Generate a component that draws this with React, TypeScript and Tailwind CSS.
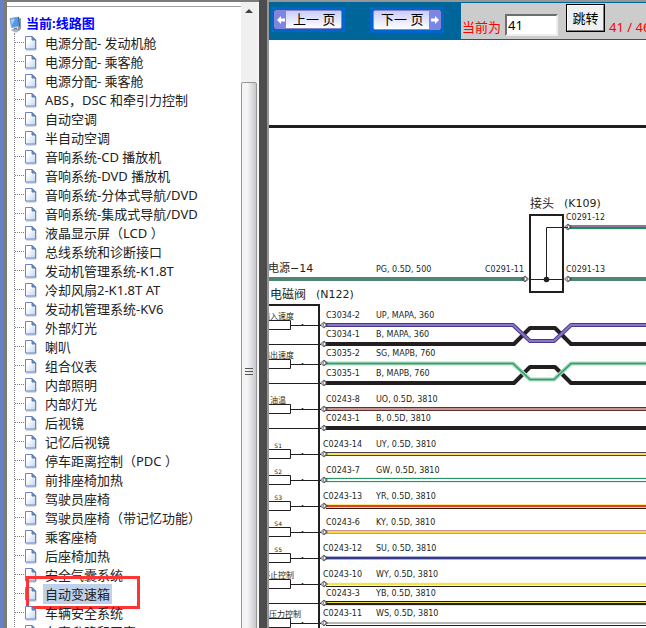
import { useState } from 'react';

const circuits = [
  '电源分配- 发动机舱',
  '电源分配- 乘客舱',
  '电源分配- 乘客舱',
  'ABS，DSC 和牵引力控制',
  '自动空调',
  '半自动空调',
  '音响系统-CD 播放机',
  '音响系统-DVD 播放机',
  '音响系统-分体式导航/DVD',
  '音响系统-集成式导航/DVD',
  '液晶显示屏（LCD ）',
  '总线系统和诊断接口',
  '发动机管理系统-K1.8T',
  '冷却风扇2-K1.8T AT',
  '发动机管理系统-KV6',
  '外部灯光',
  '喇叭',
  '组合仪表',
  '内部照明',
  '内部灯光',
  '后视镜',
  '记忆后视镜',
  '停车距离控制（PDC ）',
  '前排座椅加热',
  '驾驶员座椅',
  '驾驶员座椅（带记忆功能）',
  '乘客座椅',
  '后座椅加热',
  '安全气囊系统',
  '自动变速箱',
  '车辆安全系统',
  '车窗升降和天窗',
];

const INK = '#231f20';

// Pin labels: code, code x, wire spec, baseline
const labels: [string, number, string, number][] = [
  ['C3034-2', 326, 'UP, MAPA, 360', 318],
  ['C3034-1', 326, 'B, MAPA, 360', 337],
  ['C3035-2', 326, 'SG, MAPB, 760', 356],
  ['C3035-1', 326, 'B, MAPB, 760', 376],
  ['C0243-8', 326, 'UO, 0.5D, 3810', 402],
  ['C0243-1', 326, 'B, 0.5D, 3810', 421],
  ['C0243-14', 323, 'UY, 0.5D, 3810', 447],
  ['C0243-7', 326, 'GW, 0.5D, 3810', 473],
  ['C0243-13', 323, 'YR, 0.5D, 3810', 499],
  ['C0243-6', 326, 'KY, 0.5D, 3810', 525],
  ['C0243-12', 323, 'SU, 0.5D, 3810', 551],
  ['C0243-10', 323, 'WY, 0.5D, 3810', 577],
  ['C0243-3', 326, 'YB, 0.5D, 3810', 596],
  ['C0243-11', 323, 'WS, 0.5D, 3810', 616],
];

// Straight wires: pin y, then stripes as [top, height, colour]
const wires: { pin: number; stripes: [number, number, string][] }[] = [
  { pin: 409, stripes: [[407, 1, '#5c3236'], [408, 2, '#c8958c'], [410, 1, '#5c3236']] },
  { pin: 428, stripes: [[426, 4, INK]] },
  { pin: 454, stripes: [[452, 1, '#45424a'], [453, 2, '#f6e455'], [455, 1, '#45424a']] },
  { pin: 480, stripes: [[477, 1, '#d9f7e8'], [478, 1, '#2a9563'], [481, 1, '#2a9563'], [482, 1, '#d9f7e8']] },
  { pin: 506, stripes: [[504, 1, '#fbe78e'], [505, 2, '#e0401f'], [507, 1, '#fbd77e'], [508, 1, '#2c1d10']] },
  { pin: 532, stripes: [[530, 1, '#c8949c'], [531, 2, '#f9d443'], [533, 1, '#c694b0']] },
  { pin: 558, stripes: [[556, 1, '#a9b4cf'], [557, 2, '#39388d'], [559, 1, '#a9b4cf']] },
  { pin: 584, stripes: [[582, 1, '#fdfbdc'], [583, 2, '#f6e444'], [586, 1, INK]] },
  { pin: 603, stripes: [[601, 1, INK], [602, 1, '#efe04c'], [603, 2, INK], [605, 1, '#f5ec7e']] },
  { pin: 623, stripes: [[622, 2, '#b2b6b3'], [625, 1, INK]] },
];

const sensors: [string, number, number][] = [
  ['输入速度', 294, 325],
  ['输出速度', 294, 364],
  ['油温', 286, 409],
  ['S1', 282, 454],
  ['S2', 282, 480],
  ['S3', 282, 506],
  ['S4', 282, 532],
  ['S5', 282, 558],
  ['停止控制', 294, 584],
  ['主压力控制', 301, 623],
];

export default function App() {
  return (
    <div className="flex h-screen overflow-hidden bg-white font-['Noto_Sans','Noto_Sans_CJK_SC',sans-serif] text-[13px] text-[#222]">
      <div className="w-1 shrink-0 bg-[#6680c8]" />
      <Sidebar />
      <div className="w-2 shrink-0 bg-[#4d4d4d]" />
      <main className="flex min-w-0 flex-1 flex-col border-t-2 border-l-2 border-[#969696]">
        <Toolbar />
        <WiringDiagram />
      </main>
    </div>
  );
}

function Sidebar() {
  const [selected, setSelected] = useState(29);

  return (
    <aside className="flex w-[255px] shrink-0 border-t-2 border-l-3 border-[#7b7b7b]">
      <nav className="min-w-0 flex-1 overflow-hidden pt-1">
        <div className="border-t border-[#a0a0a0]" />
        <h1 className="mt-2 flex h-[18px] items-center pl-[2px] font-bold text-[#0000ff]">
          <ComputerIcon />
          <span className="ml-1">当前:线路图</span>
        </h1>
        <ul className="ml-[7px] border-l border-dotted border-[#808080]">
          {circuits.map((name, index) => (
            <li key={index} className="relative flex h-[19px] items-center">
              <span className="w-[9px] border-t border-dotted border-[#808080]" />
              <PageIcon />
              <a
                href="#"
                onClick={() => setSelected(index)}
                className={
                  index === selected
                    ? 'ml-[6px] bg-[#bfd0e9] px-[2px] leading-5 whitespace-nowrap'
                    : 'ml-[6px] px-[2px] leading-5 whitespace-nowrap'
                }
              >
                {name}
              </a>
              {index === selected && (
                <span className="pointer-events-none absolute -top-2 left-[11px] h-[33px] w-[114px] border-3 border-[#fd3535]" />
              )}
            </li>
          ))}
        </ul>
      </nav>
      <Scrollbar />
      <div className="w-[2px] bg-[#f5f5f5]" />
    </aside>
  );
}

function Scrollbar() {
  return (
    <div className="flex w-4 shrink-0 flex-col bg-[#f0f0f0]">
      <div className="flex h-20 shrink-0 justify-center pt-[7px]">
        <svg width="8" height="4" viewBox="0 0 8 4">
          <path d="M4 0 8 4H0z" fill="#404040" />
        </svg>
      </div>
      <div className="-mb-8 flex flex-1 flex-col items-center justify-center gap-[2px] rounded-[2px] border border-[#979797] bg-linear-to-r from-[#f4f4f4] from-40% to-[#c8c8cc]">
        <span className="h-px w-2 bg-[#555]" />
        <span className="h-px w-2 bg-[#555]" />
        <span className="h-px w-2 bg-[#555]" />
      </div>
    </div>
  );
}

function Toolbar() {
  const [page, setPage] = useState('41');

  return (
    <div className="flex h-[38px] shrink-0 items-start overflow-hidden bg-[#006699]">
      <button aria-label="上一页" className="mt-[5px] ml-[2px] shrink-0 border-3 border-[#0066cc]">
        <span className="flex h-[19px] w-[68px] items-center rounded-[2px] border border-[#8c84c8] bg-linear-to-b from-[#c9cdfa] to-white text-black">
          <span className="flex h-full w-[11px] items-center justify-center bg-[#7b86e6]">
            <ArrowIcon />
          </span>
          <span className="ml-[7px] whitespace-pre">上一 页</span>
        </span>
      </button>
      <button aria-label="下一页" className="mt-[5px] ml-[25px] shrink-0 border-3 border-[#0066cc]">
        <span className="flex h-5 w-[68px] items-center rounded-[2px] border border-[#8c84c8] bg-linear-to-b from-[#c9cdfa] to-white text-black">
          <span className="ml-[7px] flex-1 text-left whitespace-pre">下一 页</span>
          <span className="flex h-full w-[11px] items-center justify-center bg-[#7b86e6]">
            <ArrowIcon right />
          </span>
        </span>
      </button>
      <form
        onSubmit={(e) => e.preventDefault()}
        className="mt-px ml-[17px] flex h-9 min-w-0 flex-1 items-start overflow-hidden bg-[#cccccc] pl-px whitespace-nowrap text-[#ff0000]"
      >
        <label htmlFor="page" className="mt-[14px] shrink-0 leading-5">
          当前为
        </label>
        <input
          id="page"
          value={page}
          onChange={(e) => setPage(e.target.value)}
          className="mt-[11px] ml-1 h-[22px] w-[53px] shrink-0 border-2 border-t-[#6e6e6e] border-r-[#eee] border-b-[#eee] border-l-[#6e6e6e] bg-white px-px text-[13px] text-black outline-none"
        />
        <button className="mt-px ml-2 h-7 w-[39px] shrink-0 border border-black bg-[#f0f0f0] text-black">
          <span className="block h-full border border-t-white border-r-[#808080] border-b-[#808080] border-l-white leading-6">
            跳转
          </span>
        </button>
        <span className="mt-[14px] ml-1 shrink-0 leading-5">41 / 46</span>
      </form>
    </div>
  );
}

function WiringDiagram() {
  return (
    <svg className="min-h-0 w-full flex-1 bg-white font-['DejaVu_Sans','Noto_Sans_CJK_SC',sans-serif]" fill={INK}>
      {/* Sheet coordinates start at 269,40 */}
      <g transform="translate(-269 -40)">
        <rect x="269" y="125" width="3000" height="3" />

        {/* Supply and header K109 */}
        <text x="268" y="272" fontSize="11">电源−14</text>
        <text x="376" y="272" fontSize="8">PG, 0.5D, 500</text>
        <rect x="269" y="277" width="255" height="4" fill="#4f8575" />
        <rect x="570" y="277" width="3000" height="4" fill="#4f8575" />
        <rect x="570" y="225" width="3000" height="2" fill="#91749c" />
        <rect x="570" y="227" width="3000" height="2" fill="#159158" />
        <text x="530" y="208" fontSize="12">接头</text>
        <text x="564" y="207" fontSize="11">(K109)</text>
        <text x="566" y="220" fontSize="8">C0291-12</text>
        <text x="485" y="272" fontSize="8">C0291-11</text>
        <text x="566" y="272" fontSize="8">C0291-13</text>
        <rect x="530" y="215" width="33" height="77" fill="none" stroke={INK} strokeWidth="2" />
        <path d="M568 227.5H546.5V279.5M531 279.5H564" fill="none" stroke={INK} />
        <circle cx="546.5" cy="279.5" r="2.8" />
        <Pin x={525} y={279} />
        <Pin x={568} y={279} />
        <Pin x={568} y={227} />

        {/* Solenoid valve N122 */}
        <text x="270" y="299" fontSize="12">电磁阀</text>
        <text x="316" y="298" fontSize="11">(N122)</text>
        <rect x="269" y="304" width="51" height="2" />
        <rect x="318" y="304" width="2" height="3000" />
        {sensors.map(([name, x, y]) => (
          <g key={name}>
            <text x={x} y={y - 6} fontSize={name.startsWith('S') ? 6 : 8} textAnchor="end">
              {name}
            </text>
            <path d={`M269 ${y - 4.5}H290.5V${y + 4.5}H269M290.5 ${y + 0.5}H321`} fill="none" stroke={INK} />
            <circle cx="302.5" cy={y} r="1" />
          </g>
        ))}
        {[344, 383, 428, 603].map((y) => (
          <rect key={y} x="269" y={y} width="52" height="1" />
        ))}

        {/* Twisted pairs */}
        <g fill="none" strokeLinejoin="round">
          <path d="M326 344H514L530 328H555L571 344H3000" stroke={INK} strokeWidth="4" />
          <path d="M326 325H513L530 341H554L571 325H3000" stroke="#4a3994" strokeWidth="4" />
          <path d="M326 325H513L530 341H554L571 325H3000" stroke="#8c76bd" strokeWidth="2" />
          <path d="M326 383H514L530 367H555L571 383H3000" stroke={INK} strokeWidth="4" />
          <path d="M326 363.5H513L530 379.5H554L571 363.5H3000" stroke="#a9d6bb" strokeWidth="4" />
          <path d="M326 363.5H513L530 379.5H554L571 363.5H3000" stroke="#25a06c" strokeWidth="1.5" />
        </g>

        {wires.map((wire) =>
          wire.stripes.map(([top, height, color]) => (
            <rect key={top} x="326" y={top} width="3000" height={height} fill={color} />
          ))
        )}
        {[325, 344, 363, 383].map((y) => (
          <Pin key={y} x={324} y={y} />
        ))}
        {wires.map((wire) => (
          <Pin key={wire.pin} x={324} y={wire.pin} />
        ))}

        {labels.map(([code, x, spec, y]) => (
          <g key={code} fontSize="8">
            <text x={x} y={y}>{code}</text>
            <text x="376" y={y}>{spec}</text>
          </g>
        ))}
      </g>
    </svg>
  );
}

function Pin({ x, y }: { x: number; y: number }) {
  return (
    <g fill="none" stroke="#3c3844" strokeWidth="0.8">
      <path d={`M${x - 3.5} ${y}l3.5 -3 3.5 3 -3.5 3z`} />
      <circle cx={x + 0.5} cy={y} r="1.6" />
    </g>
  );
}

function ArrowIcon({ right = false }: { right?: boolean }) {
  return (
    <svg width="8" height="8" viewBox="0 0 8 8" fill="#fff">
      {right ? <path d="M8 4 4 0v2.5H0v3h4V8z" /> : <path d="M0 4 4 0v2.5h4v3H4V8z" />}
    </svg>
  );
}

function PageIcon() {
  return (
    <svg width="13" height="16" viewBox="0 0 13 16" className="shrink-0">
      <defs>
        <linearGradient id="page-fill" x1="0" y1="0" x2="1" y2="1">
          <stop offset="0.3" stopColor="#fff" />
          <stop offset="1" stopColor="#bcd5f5" />
        </linearGradient>
      </defs>
      <path d="M2 15h10V5" fill="none" stroke="#b5b8c4" />
      <path d="M1.5 1.5h6.500l3.500 3.500v9h-10z" fill="url(#page-fill)" stroke="#6a86c4" />
      <path d="M8 1.500v3.500h3.500z" fill="#7fa3d8" stroke="#3e5f9f" strokeWidth="0.8" />
    </svg>
  );
}

function ComputerIcon() {
  return (
    <svg width="13" height="17" viewBox="0 0 13 17" className="shrink-0">
      <path d="M8.5 3 12 2v11l-3 2z" fill="#8e98a8" />
      <path d="M1 2.5 9.5 1l1 9.5-8 1z" fill="#4f9be8" stroke="#99a9c2" />
      <path d="M2 3.5 6 2.8 3 9z" fill="#a6d5fb" />
      <path d="M9.5 1l1 9.5" stroke="#2357a8" />
      <path d="M5 12h3l.5 2h-4z" fill="#6b7686" />
      <path d="M2.5 14l4-1 4 1-3.5 2.3z" fill="#b5bcc8" stroke="#7a8494" strokeWidth="0.5" />
    </svg>
  );
}
